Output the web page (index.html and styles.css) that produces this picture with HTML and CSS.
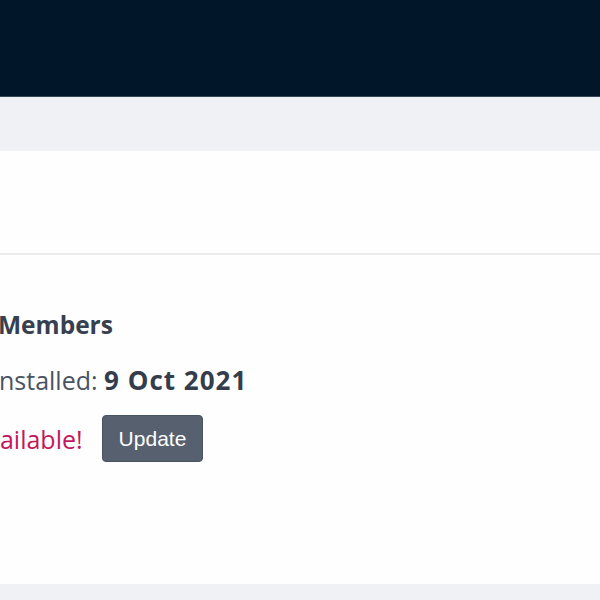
FILE: index.html
```html
<!DOCTYPE html>
<html>
<head>
<meta charset="utf-8">
<link rel="stylesheet" href="styles.css">
</head>
<body>
<header class="topbar"></header>
<div class="subbar"></div>
<main class="panel">
  <div class="panel-head"></div>
  <section class="plugin">
    <h2 class="title">Members</h2>
    <p class="installed">Installed: <strong>9 Oct 2021</strong></p>
    <div class="update-row">
      <span class="notice">New version available!</span>
      <button class="btn">Update</button>
    </div>
  </section>
</main>
<div class="footer-band"></div>
</body>
</html>
```
FILE: styles.css
```css
html, body {
  margin: 0;
  padding: 0;
  background: #f0f1f5;
  overflow: hidden;
  font-family: "Open Sans", "Noto Sans", sans-serif;
}
.topbar {
  height: 96px;
  background: #011629;
  border-bottom: 1px solid #3b4656;
}
.subbar {
  height: 54px;
  background: #f0f1f5;
}
.panel {
  background: #fefefe;
  height: 433px;
  overflow: hidden;
}
.panel-head {
  height: 102px;
  border-bottom: 2px solid #ebebeb;
}
.plugin {
  padding-top: 50px;
}
.title {
  margin: 0 0 0 -2px;
  font-size: 24.5px;
  font-weight: 700;
  color: #36404e;
  line-height: 40px;
}
.installed {
  margin: 15px 0 0 -8px;
  font-size: 25px;
  color: #4a5361;
  line-height: 40px;
}
.installed strong {
  color: #333d4b;
  font-weight: 700;
  font-size: 26px;
  letter-spacing: 1px;
}
.update-row {
  display: flex;
  align-items: center;
  gap: 19px;
  margin-top: 15px;
  margin-left: -177px;
}
.notice {
  font-size: 25px;
  color: #c2185b;
}
.btn {
  font-family: "Liberation Sans", Arial, sans-serif;
  font-size: 21px;
  color: #fff;
  background: #56606e;
  border: 1px solid #4a5360;
  border-radius: 4px;
  padding: 0 16px;
  height: 47px;
}
.footer-band {
  height: 20px;
  background: #f0f1f5;
}
```
